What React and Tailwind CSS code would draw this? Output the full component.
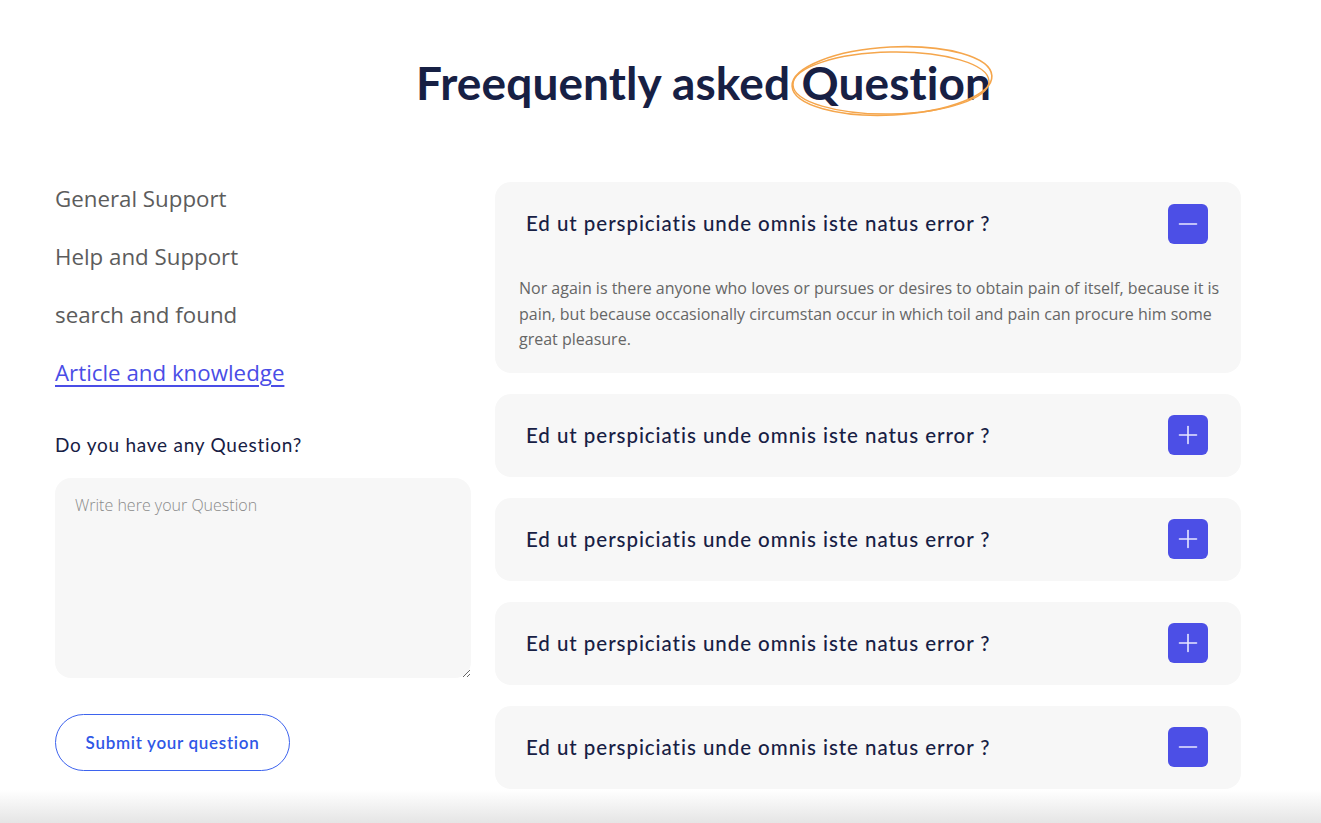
import React from "react";

const faqs = [
  { open: true, icon: "minus" },
  { open: false, icon: "plus" },
  { open: false, icon: "plus" },
  { open: false, icon: "plus" },
  { open: false, icon: "minus" },
];

function Icon({ type }) {
  return (
    <div className="w-10 h-10 rounded-md bg-[#4c4fe6] flex items-center justify-center shrink-0">
      <svg width="20" height="20" viewBox="0 0 20 20" fill="none" stroke="#e8e8ff" strokeWidth="1.6" strokeLinecap="round">
        <line x1="1.5" y1="10" x2="18.5" y2="10" />
        {type === "plus" && <line x1="10" y1="1.5" x2="10" y2="18.5" />}
      </svg>
    </div>
  );
}

export default function App() {
  return (
    <div className="bg-white w-full min-h-[823px] flex flex-col">
      <div className="flex-1">
        <div className="pt-[53px] pl-[86px] flex justify-center">
          <h1 className="font-['Lato',sans-serif] font-bold text-[46px] leading-[60px] text-[#172044] tracking-[0.1px] whitespace-nowrap">
            Freequently asked{" "}
            <span className="relative inline-block">
              Question
              <svg className="absolute left-[-13px] top-[-10px] pointer-events-none" width="208" height="80" viewBox="0 0 208 80" fill="none">
                <ellipse cx="104" cy="38" rx="100" ry="34" stroke="#f5a64c" strokeWidth="1.6" transform="rotate(-3 104 38)" />
                <ellipse cx="103" cy="40" rx="98" ry="31" stroke="#f5a64c" strokeWidth="1.4" transform="rotate(-1 103 40)" />
              </svg>
            </span>
          </h1>
        </div>

        <div className="mt-[69px] ml-[55px] flex gap-6 items-start">
          <div className="w-[416px] shrink-0 pt-[2px]">
            <nav className="flex flex-col font-['Open_Sans',sans-serif] text-[22.3px] text-[#5c5c5c] leading-[30px] gap-[28px]">
              <a className="block">General Support</a>
              <a className="block">Help and Support</a>
              <a className="block">search and found</a>
              <a className="block text-[#4a4de6] underline underline-offset-[4px] decoration-[1.5px]">Article and knowledge</a>
            </nav>
            <p className="mt-[44px] font-['Lato',sans-serif] font-normal text-[19px] tracking-[0.75px] text-[#172044] leading-[26px]">Do you have any Question?</p>
            <textarea
              className="mt-[20px] w-full h-[200px] rounded-2xl bg-[#f7f7f7] px-5 py-[15px] font-['Open_Sans',sans-serif] font-light text-[16px] leading-[24px] text-[#333] placeholder:text-[#8a8a8a] outline-none block"
              placeholder="Write here your Question"
            />
            <button className="mt-[36px] w-[235px] h-[57px] rounded-full border border-[#3d63ee] text-[#2f57e6] font-['Lato',sans-serif] font-semibold text-[17px] tracking-[0.7px]">
              Submit your question
            </button>
          </div>

          <div className="w-[746px] shrink-0 flex flex-col gap-[21px]">
            {faqs.map((f, i) => (
              <div key={i} className="bg-[#f7f7f7] rounded-2xl">
                <div className="h-[83px] flex items-center justify-between pl-[31px] pr-[33px]">
                  <span className="font-['Lato',sans-serif] font-medium text-[20.5px] tracking-[0.95px] text-[#172044]">
                    Ed ut perspiciatis unde omnis iste natus error ?
                  </span>
                  <Icon type={f.icon} />
                </div>
                {f.open && (
                  <p className="pl-6 pr-[18px] pt-[11px] pb-[20px] font-['Open_Sans',sans-serif] text-[16px] leading-[25.5px] text-[#666]">
                    Nor again is there anyone who loves or pursues or desires to obtain pain of itself, because it is pain, but because occasionally circumstan occur in which toil and pain can procure him some great pleasure.
                  </p>
                )}
              </div>
            ))}
          </div>
        </div>
      </div>
      <div className="h-[33px] bg-gradient-to-b from-white to-[#e5e5e5]" />
    </div>
  );
}
